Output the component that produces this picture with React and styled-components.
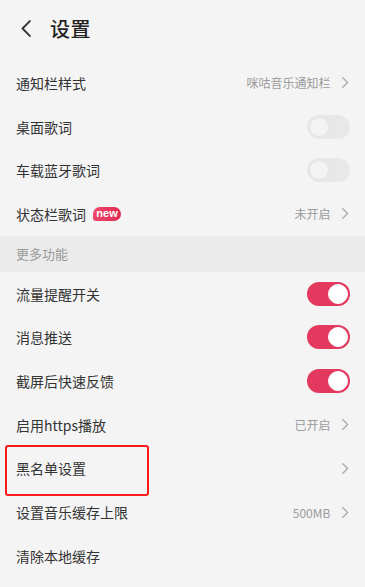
import styled, { createGlobalStyle } from "styled-components";

const GlobalStyle = createGlobalStyle`
  html, body {
    margin: 0;
    padding: 0;
    background: #f4f4f4;
  }
  body {
    font-family: "Noto Sans CJK SC", "Noto Sans", sans-serif;
  }
`;

const Chevron = ({ size = 11, color = "#aaa", left = false, width = 1.2 }) => (
  <svg width={size * 0.6} height={size} viewBox="0 0 6 10" fill="none">
    <path
      d={left ? "M5.2 0.6 L0.9 5 L5.2 9.4" : "M0.8 0.6 L5.1 5 L0.8 9.4"}
      stroke={color}
      strokeWidth={width}
      strokeLinecap="round"
      strokeLinejoin="round"
    />
  </svg>
);

const rows1 = [
  { label: "通知栏样式", value: "咪咕音乐通知栏", arrow: true },
  { label: "桌面歌词", toggle: false },
  { label: "车载蓝牙歌词", toggle: false },
  { label: "状态栏歌词", badge: true, value: "未开启", arrow: true },
];

const rows2 = [
  { label: "流量提醒开关", toggle: true },
  { label: "消息推送", toggle: true },
  { label: "截屏后快速反馈", toggle: true },
  { label: "启用https播放", value: "已开启", arrow: true },
  { label: "黑名单设置", arrow: true, marked: true },
  { label: "设置音乐缓存上限", value: "500MB", arrow: true },
  { label: "清除本地缓存" },
];

const SettingRow = ({ item }) => (
  <Row>
    <Label>
      {item.label}
      {item.badge && <Badge>new</Badge>}
    </Label>
    <Right>
      {item.value && <Value>{item.value}</Value>}
      {item.arrow && <Chevron />}
      {item.toggle !== undefined && (
        <Toggle $on={item.toggle}>
          <Knob $on={item.toggle} />
        </Toggle>
      )}
    </Right>
    {item.marked && <Mark />}
  </Row>
);

const App = () => {
  return (
    <Page>
      <GlobalStyle />
      <Header>
        <Back>
          <Chevron size={17} color="#333" left width={1.1} />
        </Back>
        <Title>设置</Title>
      </Header>
      {rows1.map((r) => (
        <SettingRow key={r.label} item={r} />
      ))}
      <Section>更多功能</Section>
      {rows2.map((r) => (
        <SettingRow key={r.label} item={r} />
      ))}
    </Page>
  );
};

export default App;

const Page = styled.div`
  width: 365px;
  height: 587px;
  overflow: hidden;
  background: #f4f4f4;
  color: #333;
`;

const Header = styled.div`
  display: flex;
  align-items: center;
  height: 57px;
  padding: 0 0 4px 21px;
`;

const Back = styled.div`
  display: flex;
  align-items: center;
  width: 29px;
`;

const Title = styled.h1`
  margin: 0;
  font-size: 20px;
  font-weight: 500;
  color: #222;
  letter-spacing: 0.5px;
`;

const Row = styled.div`
  position: relative;
  display: flex;
  align-items: center;
  justify-content: space-between;
  height: 43.7px;
  padding: 0 16px;
`;

const Label = styled.div`
  display: flex;
  align-items: center;
  font-size: 14px;
  color: #333;
`;

const Badge = styled.span`
  display: inline-flex;
  align-items: center;
  justify-content: center;
  margin-left: 7px;
  width: 28px;
  height: 14px;
  border-radius: 7px 7px 7px 3px;
  background: linear-gradient(90deg, #f0476c, #e02a52);
  color: #fff;
  font-family: "Liberation Sans", Arial, sans-serif;
  font-size: 11px;
  font-weight: 700;
  line-height: 1;
`;

const Right = styled.div`
  display: flex;
  align-items: center;
  gap: 12px;
`;

const Value = styled.span`
  font-size: 12px;
  color: #9a9a9a;
`;

const Toggle = styled.div`
  display: flex;
  align-items: center;
  justify-content: ${(p) => (p.$on ? "flex-end" : "flex-start")};
  width: 43px;
  height: 24px;
  box-sizing: border-box;
  padding: 2px;
  margin-right: -1px;
  border-radius: 12px;
  background: ${(p) => (p.$on ? "#e3395f" : "#e8e8e9")};
`;

const Knob = styled.div`
  width: 20px;
  height: 20px;
  border-radius: 50%;
  box-sizing: border-box;
  background: ${(p) => (p.$on ? "#fff" : "#f3f3f3")};
  border: 1px solid ${(p) => (p.$on ? "#fff" : "#e4e4e4")};
`;

const Section = styled.div`
  display: flex;
  align-items: center;
  height: 36px;
  padding: 0 16px;
  background: #ebebeb;
  font-size: 13px;
  color: #9a9a9a;
`;

const Mark = styled.div`
  position: absolute;
  left: 5px;
  top: -2px;
  width: 144px;
  height: 51px;
  box-sizing: border-box;
  border: 2px solid #ff1a1a;
  border-radius: 3px;
  pointer-events: none;
`;
